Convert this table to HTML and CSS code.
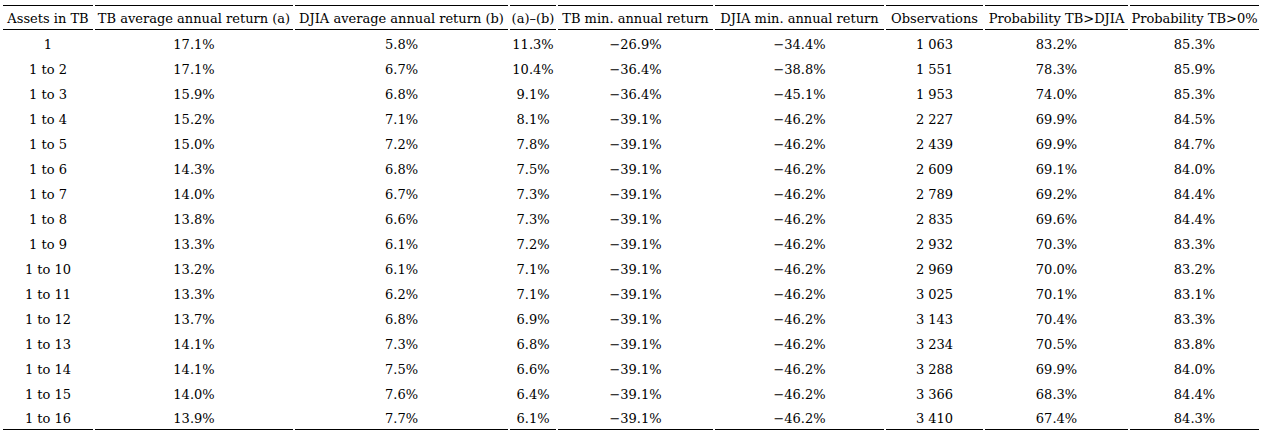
FILE: index.html
```html
<!DOCTYPE html>
<html lang="en">
<head>
<meta charset="utf-8">
<title>TB vs DJIA</title>
<link rel="stylesheet" href="styles.css">
</head>
<body>
<table class="data">
  <colgroup>
    <col class="c1"><col class="c2"><col class="c3"><col class="c4"><col class="c5"><col class="c6"><col class="c7"><col class="c8"><col class="c9">
  </colgroup>
  <thead>
    <tr>
      <th>Assets in TB</th>
      <th>TB average annual return (a)</th>
      <th>DJIA average annual return (b)</th>
      <th>(a)–(b)</th>
      <th>TB min. annual return</th>
      <th>DJIA min. annual return</th>
      <th>Observations</th>
      <th>Probability TB&gt;DJIA</th>
      <th>Probability TB&gt;0%</th>
    </tr>
  </thead>
  <tbody>
    <tr><td>1</td><td>17.1%</td><td>5.8%</td><td>11.3%</td><td>−26.9%</td><td>−34.4%</td><td>1 063</td><td>83.2%</td><td>85.3%</td></tr>
    <tr><td>1 to 2</td><td>17.1%</td><td>6.7%</td><td>10.4%</td><td>−36.4%</td><td>−38.8%</td><td>1 551</td><td>78.3%</td><td>85.9%</td></tr>
    <tr><td>1 to 3</td><td>15.9%</td><td>6.8%</td><td>9.1%</td><td>−36.4%</td><td>−45.1%</td><td>1 953</td><td>74.0%</td><td>85.3%</td></tr>
    <tr><td>1 to 4</td><td>15.2%</td><td>7.1%</td><td>8.1%</td><td>−39.1%</td><td>−46.2%</td><td>2 227</td><td>69.9%</td><td>84.5%</td></tr>
    <tr><td>1 to 5</td><td>15.0%</td><td>7.2%</td><td>7.8%</td><td>−39.1%</td><td>−46.2%</td><td>2 439</td><td>69.9%</td><td>84.7%</td></tr>
    <tr><td>1 to 6</td><td>14.3%</td><td>6.8%</td><td>7.5%</td><td>−39.1%</td><td>−46.2%</td><td>2 609</td><td>69.1%</td><td>84.0%</td></tr>
    <tr><td>1 to 7</td><td>14.0%</td><td>6.7%</td><td>7.3%</td><td>−39.1%</td><td>−46.2%</td><td>2 789</td><td>69.2%</td><td>84.4%</td></tr>
    <tr><td>1 to 8</td><td>13.8%</td><td>6.6%</td><td>7.3%</td><td>−39.1%</td><td>−46.2%</td><td>2 835</td><td>69.6%</td><td>84.4%</td></tr>
    <tr><td>1 to 9</td><td>13.3%</td><td>6.1%</td><td>7.2%</td><td>−39.1%</td><td>−46.2%</td><td>2 932</td><td>70.3%</td><td>83.3%</td></tr>
    <tr><td>1 to 10</td><td>13.2%</td><td>6.1%</td><td>7.1%</td><td>−39.1%</td><td>−46.2%</td><td>2 969</td><td>70.0%</td><td>83.2%</td></tr>
    <tr><td>1 to 11</td><td>13.3%</td><td>6.2%</td><td>7.1%</td><td>−39.1%</td><td>−46.2%</td><td>3 025</td><td>70.1%</td><td>83.1%</td></tr>
    <tr><td>1 to 12</td><td>13.7%</td><td>6.8%</td><td>6.9%</td><td>−39.1%</td><td>−46.2%</td><td>3 143</td><td>70.4%</td><td>83.3%</td></tr>
    <tr><td>1 to 13</td><td>14.1%</td><td>7.3%</td><td>6.8%</td><td>−39.1%</td><td>−46.2%</td><td>3 234</td><td>70.5%</td><td>83.8%</td></tr>
    <tr><td>1 to 14</td><td>14.1%</td><td>7.5%</td><td>6.6%</td><td>−39.1%</td><td>−46.2%</td><td>3 288</td><td>69.9%</td><td>84.0%</td></tr>
    <tr><td>1 to 15</td><td>14.0%</td><td>7.6%</td><td>6.4%</td><td>−39.1%</td><td>−46.2%</td><td>3 366</td><td>68.3%</td><td>84.4%</td></tr>
    <tr><td>1 to 16</td><td>13.9%</td><td>7.7%</td><td>6.1%</td><td>−39.1%</td><td>−46.2%</td><td>3 410</td><td>67.4%</td><td>84.3%</td></tr>
  </tbody>
</table>
</body>
</html>
```
FILE: styles.css
```css
html, body {
  margin: 0;
  padding: 0;
  background: #ffffff;
}

.data {
  margin: 5px 0 0 1px;
  border-collapse: separate;
  border-spacing: 2px 0;
  table-layout: fixed;
  width: 1259px;
  font-family: "DejaVu Serif", "Liberation Serif", serif;
  font-size: 13px;
  color: #000;
}

.c1 { width: 90px; }
.c2 { width: 198px; }
.c3 { width: 213px; }
.c4 { width: 46px; }
.c5 { width: 155px; }
.c6 { width: 169px; }
.c7 { width: 97px; }
.c8 { width: 143px; }
.c9 { width: 129px; }

.data th,
.data td {
  padding: 0;
  text-align: center;
  white-space: nowrap;
  font-weight: normal;
}

.data th {
  height: 25px;
  padding-top: 1px;
  box-sizing: border-box;
  border-top: 1px solid #000;
  border-bottom: 1px solid #000;
  vertical-align: middle;
}

.data td {
  height: 25px;
  vertical-align: middle;
  padding-top: 3px;
  box-sizing: border-box;
}

.data tbody tr:last-child td {
  border-bottom: 1px solid #000;
}
```
